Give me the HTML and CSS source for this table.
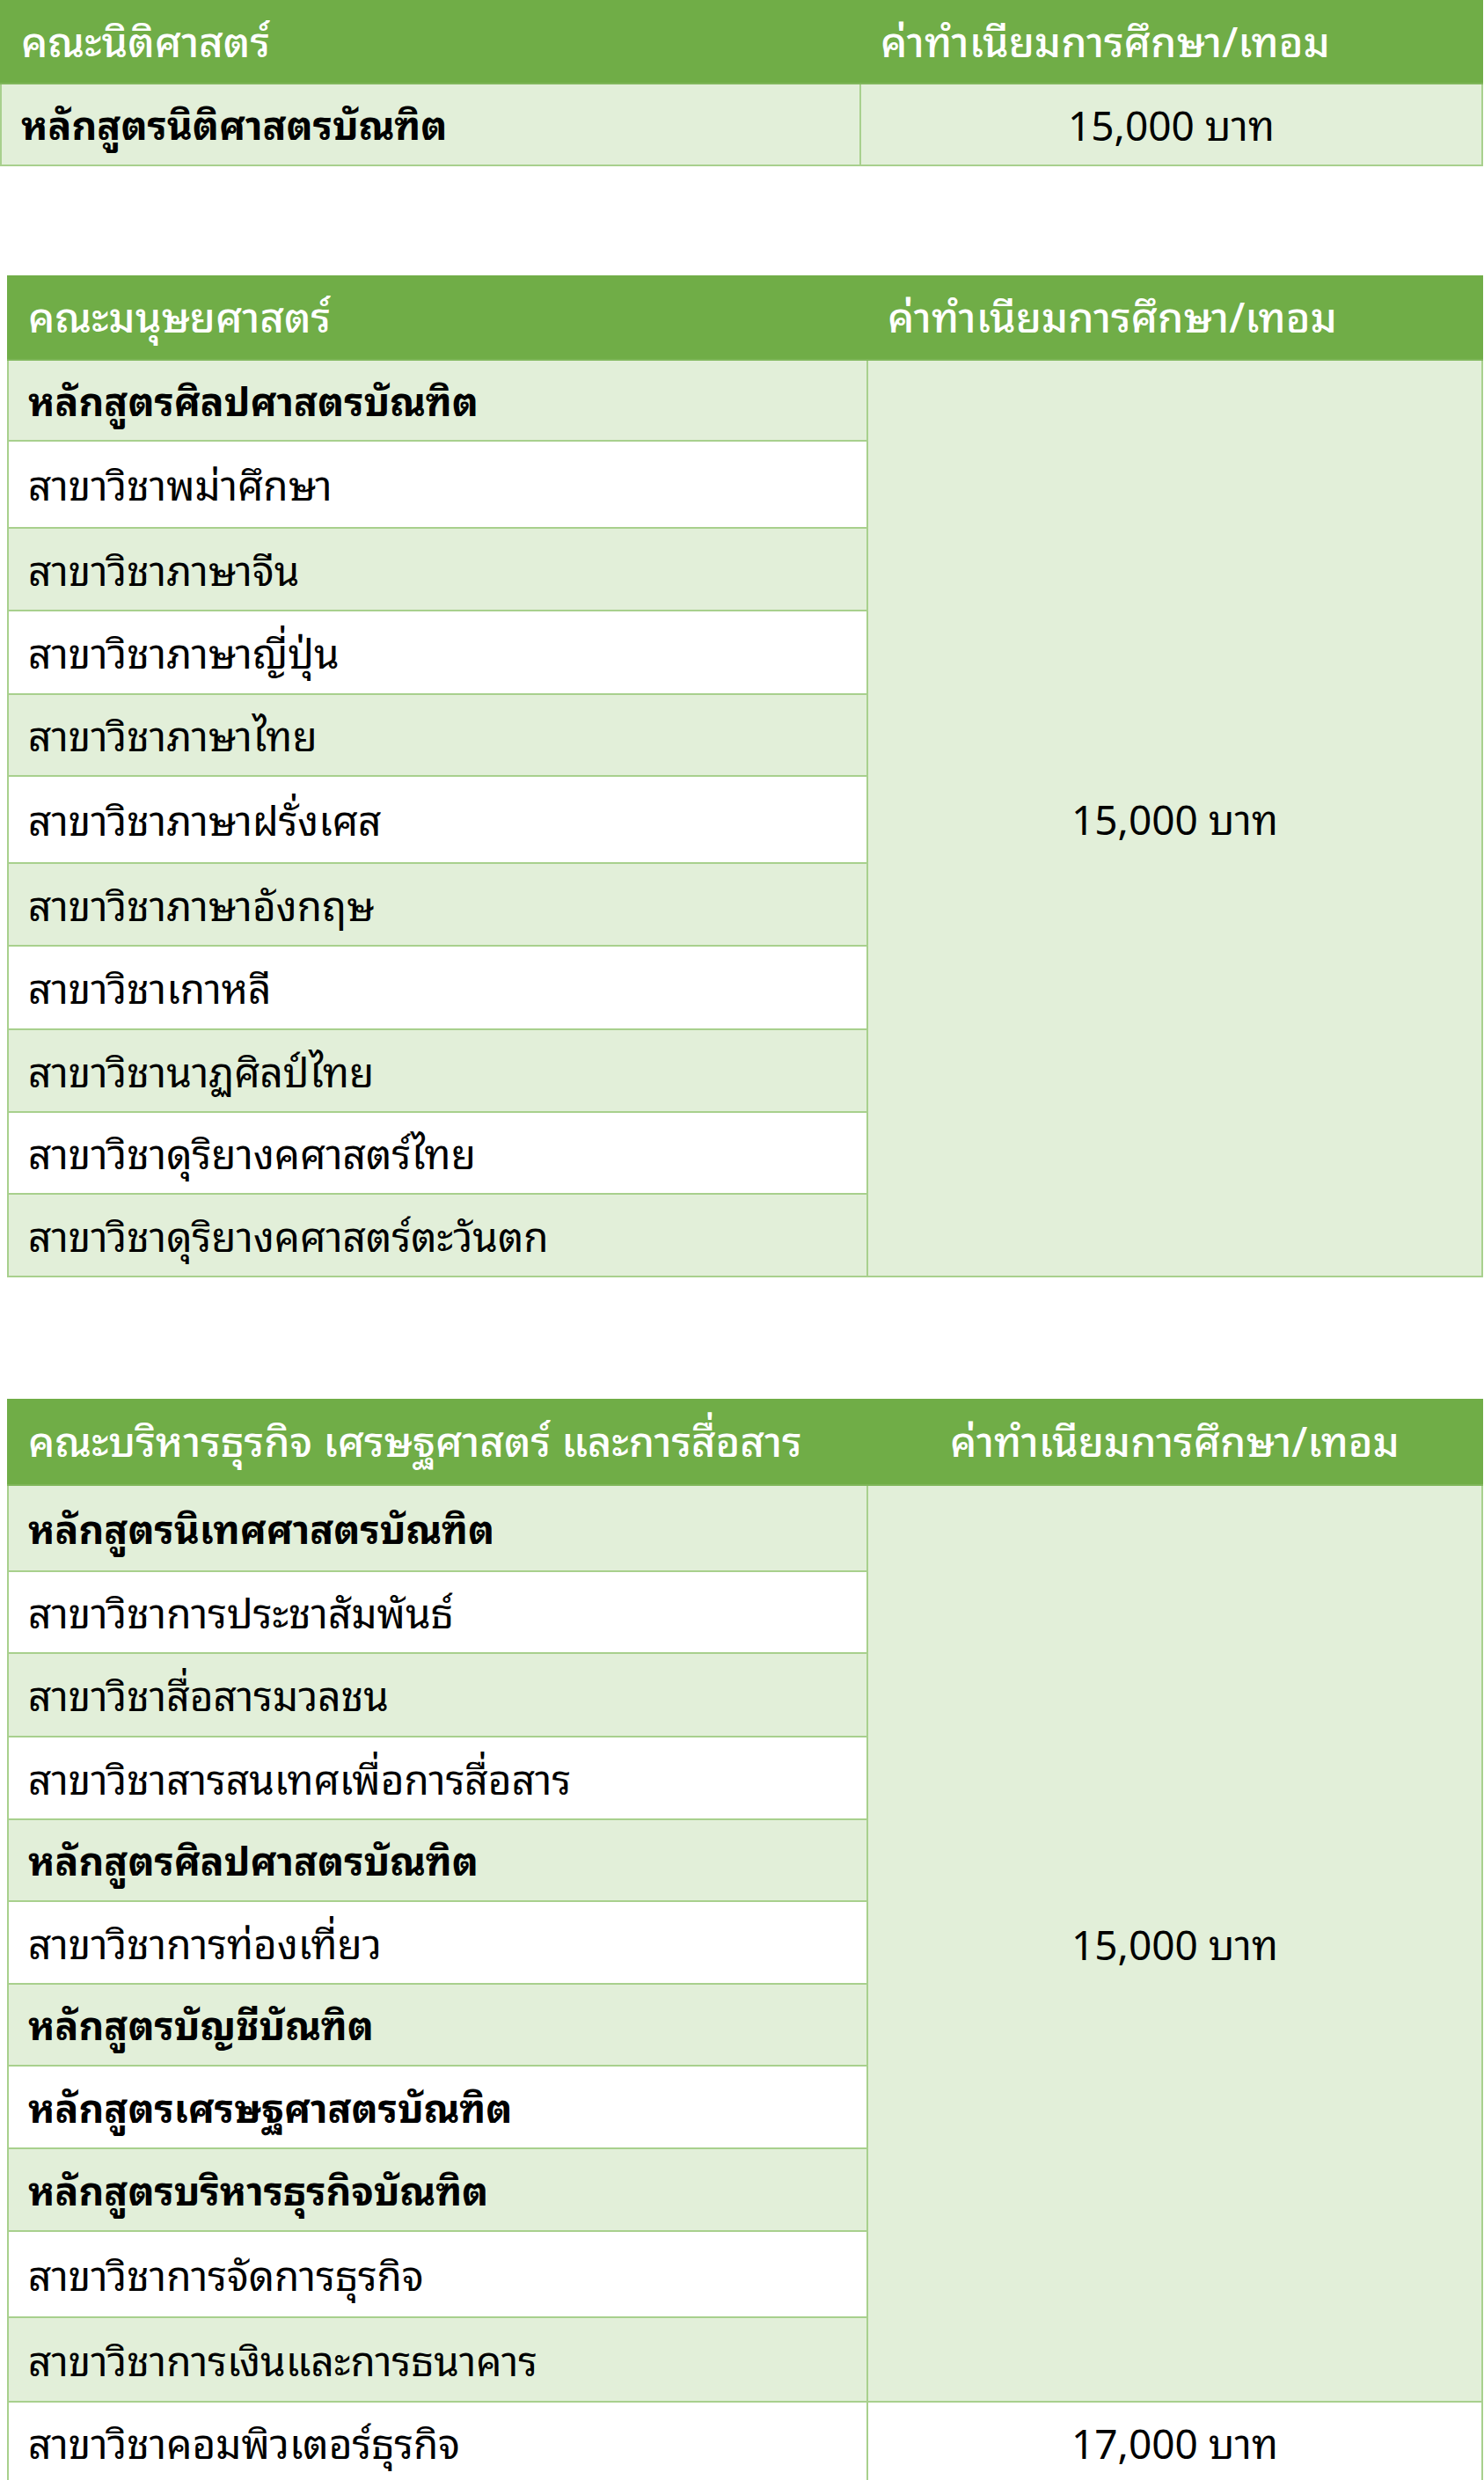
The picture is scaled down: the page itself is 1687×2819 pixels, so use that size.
FILE: index.html
```html
<!DOCTYPE html>
<html lang="th">
<head>
<meta charset="utf-8">
<title>ค่าทำเนียมการศึกษา</title>
<link rel="stylesheet" href="styles.css">
</head>
<body>
<main class="page">
  <table class="fee t1">
    <colgroup><col class="c-prog1"><col class="c-fee1"></colgroup>
    <thead>
      <tr class="h94"><th>คณะนิติศาสตร์</th><th>ค่าทำเนียมการศึกษา/เทอม</th></tr>
    </thead>
    <tbody>
      <tr class="alt h93"><td class="deg">หลักสูตรนิติศาสตรบัณฑิต</td><td class="amt">15,000 บาท</td></tr>
    </tbody>
  </table>

  <table class="fee t2">
    <colgroup><col class="c-prog"><col class="c-fee"></colgroup>
    <thead>
      <tr class="h95"><th>คณะมนุษยศาสตร์</th><th>ค่าทำเนียมการศึกษา/เทอม</th></tr>
    </thead>
    <tbody>
      <tr class="alt h92"><td class="deg">หลักสูตรศิลปศาสตรบัณฑิต</td><td class="amt alt" rowspan="11">15,000 บาท</td></tr>
      <tr class="h99"><td>สาขาวิชาพม่าศึกษา</td></tr>
      <tr class="alt h94"><td>สาขาวิชาภาษาจีน</td></tr>
      <tr class="h95"><td>สาขาวิชาภาษาญี่ปุ่น</td></tr>
      <tr class="alt h93"><td>สาขาวิชาภาษาไทย</td></tr>
      <tr class="h99"><td>สาขาวิชาภาษาฝรั่งเศส</td></tr>
      <tr class="alt h94"><td>สาขาวิชาภาษาอังกฤษ</td></tr>
      <tr class="h95"><td>สาขาวิชาเกาหลี</td></tr>
      <tr class="alt h94"><td>สาขาวิชานาฏศิลป์ไทย</td></tr>
      <tr class="h93"><td>สาขาวิชาดุริยางคศาสตร์ไทย</td></tr>
      <tr class="alt h94"><td>สาขาวิชาดุริยางคศาสตร์ตะวันตก</td></tr>
    </tbody>
  </table>

  <table class="fee t3">
    <colgroup><col class="c-prog"><col class="c-fee"></colgroup>
    <thead>
      <tr class="h97"><th>คณะบริหารธุรกิจ เศรษฐศาสตร์ และการสื่อสาร</th><th class="center">ค่าทำเนียมการศึกษา/เทอม</th></tr>
    </thead>
    <tbody>
      <tr class="alt h98"><td class="deg">หลักสูตรนิเทศศาสตรบัณฑิต</td><td class="amt alt" rowspan="11">15,000 บาท</td></tr>
      <tr class="h93"><td>สาขาวิชาการประชาสัมพันธ์</td></tr>
      <tr class="alt h95"><td>สาขาวิชาสื่อสารมวลชน</td></tr>
      <tr class="h94"><td>สาขาวิชาสารสนเทศเพื่อการสื่อสาร</td></tr>
      <tr class="alt h93"><td class="deg">หลักสูตรศิลปศาสตรบัณฑิต</td></tr>
      <tr class="h94"><td>สาขาวิชาการท่องเที่ยว</td></tr>
      <tr class="alt h93"><td class="deg">หลักสูตรบัญชีบัณฑิต</td></tr>
      <tr class="h94"><td class="deg">หลักสูตรเศรษฐศาสตรบัณฑิต</td></tr>
      <tr class="alt h94"><td class="deg">หลักสูตรบริหารธุรกิจบัณฑิต</td></tr>
      <tr class="h98"><td>สาขาวิชาการจัดการธุรกิจ</td></tr>
      <tr class="alt h96"><td>สาขาวิชาการเงินและการธนาคาร</td></tr>
      <tr class="h93"><td>สาขาวิชาคอมพิวเตอร์ธุรกิจ</td><td class="amt">17,000 บาท</td></tr>
    </tbody>
  </table>
</main>
</body>
</html>
```

FILE: styles.css
```css
html, body {
  margin: 0;
  padding: 0;
  background: #ffffff;
}

body {
  font-family: "Noto Sans Thai Looped", "Loma", "Garuda", "Leelawadee UI", "Noto Sans Thai", "Noto Sans", "Liberation Sans", sans-serif;
  color: #000000;
}

.page {
  display: flex;
  flex-direction: column;
  align-items: flex-start;
}

.fee {
  border-collapse: collapse;
  table-layout: fixed;
}

.t1 {
  width: 1684px;
}

.t2 {
  width: 1676px;
  margin: 124px 0 0 8px;
}

.t3 {
  width: 1676px;
  margin: 138px 0 0 8px;
}

.c-prog1 { width: 977px; }
.c-fee1 { width: 707px; }
.c-prog { width: 977px; }
.c-fee { width: 699px; }

.fee th {
  background: #70ad47;
  color: #ffffff;
  font-weight: 500;
  font-size: 47px;
  text-align: left;
  padding: 0 22px 10px;
  border: 2px solid #70ad47;
  border-bottom-color: #7fb65a;
  white-space: nowrap;
}

.fee th.center {
  text-align: center;
}

.fee td {
  font-size: 46px;
  padding: 0 22px 5px;
  border: 2px solid #a8d08d;
  background: #ffffff;
  white-space: nowrap;
  vertical-align: middle;
}

.fee tr.alt td,
.fee td.alt {
  background: #e2efd9;
}

.fee td.deg {
  font-weight: 700;
  font-size: 44.5px;
}

.fee td.amt {
  text-align: center;
}

.h92 { height: 92px; }
.h93 { height: 93px; }
.h94 { height: 94px; }
.h95 { height: 95px; }
.h96 { height: 96px; }
.h97 { height: 97px; }
.h98 { height: 98px; }
.h99 { height: 99px; }
```
